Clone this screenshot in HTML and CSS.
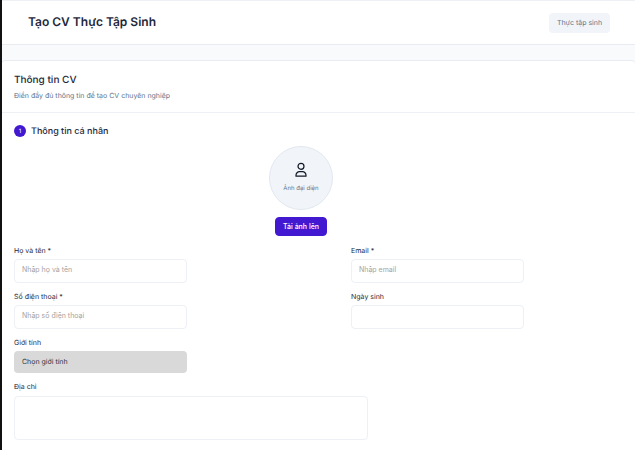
FILE: index.html
```html
<!DOCTYPE html>
<html lang="vi">
<head>
<meta charset="utf-8">
<title>Tạo CV Thực Tập Sinh</title>
<link rel="stylesheet" href="styles.css">
</head>
<body>
<div class="page">
  <header class="topbar">
    <h1 class="title">Tạo CV Thực Tập Sinh</h1>
    <span class="role">Thực tập sinh</span>
  </header>
  <main class="main">
    <section class="card">
      <div class="card-head">
        <h2 class="card-title">Thông tin CV</h2>
        <p class="card-sub">Điền đầy đủ thông tin để tạo CV chuyên nghiệp</p>
      </div>
      <div class="card-body">
        <div class="section-title"><span class="step">1</span><h3 class="section-name">Thông tin cá nhân</h3></div>
        <div class="avatar-block">
          <div class="avatar">
            <svg class="avatar-icon" viewBox="0 0 20 20" width="20" height="20" fill="none" stroke="#111827" stroke-width="1.2" stroke-linecap="round" stroke-linejoin="round"><circle cx="10" cy="6.3" r="3"/><path d="M5 16.2v-1a3.5 3.5 0 0 1 3.5-3.5h3a3.5 3.5 0 0 1 3.5 3.5v1z"/></svg>
            <span class="avatar-text">Ảnh đại diện</span>
          </div>
          <button class="upload" type="button">Tải ảnh lên</button>
        </div>
        <div class="grid">
          <div class="field"><label class="label">Họ và tên *</label><input class="input" placeholder="Nhập họ và tên"></div>
          <div class="field"><label class="label">Email *</label><input class="input" placeholder="Nhập email"></div>
          <div class="field"><label class="label">Số điện thoại *</label><input class="input" placeholder="Nhập số điện thoại"></div>
          <div class="field"><label class="label">Ngày sinh</label><input class="input"></div>
          <div class="field"><label class="label">Giới tính</label><div class="select">Chọn giới tính</div></div>
        </div>
        <div class="field address"><label class="label">Địa chỉ</label><textarea class="textarea"></textarea></div>
      </div>
    </section>
  </main>
</div>
</body>
</html>
```
FILE: styles.css
```css
* { box-sizing: border-box; }
html, body { margin: 0; height: 100%; }
body { font-family: Inter, "Noto Sans", sans-serif; background: #fff; overflow: hidden; text-rendering: geometricPrecision; }
.page { height: 450px; border-left: 2px solid #111; background: #f8fafc; }
.topbar { height: 45px; background: #fff; border-top: 1px solid #edf0f5; border-bottom: 1px solid #e8ecf2; display: flex; align-items: center; justify-content: space-between; padding: 0 25px 2px 26px; }
.title { margin: 0; font-size: 12px; font-weight: 600; color: #1e293b; }
.role { width: 61px; height: 20px; margin-top: 2px; border-radius: 4px; background: #f1f5f9; color: #64748b; font-size: 7px; display: flex; align-items: center; justify-content: center; }
.main { padding-top: 15px; }
.card { background: #fff; border-top: 1px solid #e8ecf2; border-radius: 4px 4px 0 0; height: 390px; }
.card-head { height: 52px; border-bottom: 1px solid #edf0f5; padding: 12px 12px 0; }
.card-title { margin: 0; font-size: 10px; line-height: 14px; font-weight: 500; color: #1e293b; }
.card-sub { margin: 2px 0 0; font-size: 7px; line-height: 14px; color: #64748b; }
.card-body { padding: 12px 12px 0; }
.section-title { display: flex; align-items: center; gap: 5px; height: 12px; }
.step { width: 12px; height: 12px; border-radius: 50%; background: #4318d1; color: #fff; font-size: 6px; display: flex; align-items: center; justify-content: center; }
.section-name { margin: 0; font-size: 9px; font-weight: 500; color: #1e293b; }
.avatar-block { display: flex; flex-direction: column; align-items: center; gap: 7px; margin-top: 9px; width: 574px; }
.avatar { width: 64px; height: 64px; padding-bottom: 4px; border-radius: 50%; background: #f1f5f9; border: 1px solid #e2e8f0; display: flex; flex-direction: column; align-items: center; justify-content: center; gap: 5px; }
.avatar-icon { display: block; }
.avatar-text { font-size: 6px; line-height: 8px; color: #64748b; }
.upload { width: 52px; height: 19px; padding: 0; border: 1px solid #4318d1; border-radius: 4px; background: #4318d1; color: #fff; font: 500 7px Inter, sans-serif; }
.grid { display: grid; grid-template-columns: 173px 173px; column-gap: 164px; row-gap: 7px; margin-top: 8px; }
.field { display: flex; flex-direction: column; }
.label { font-size: 7px; line-height: 13px; font-weight: 400; color: #1e293b; margin-bottom: 2px; }
.input { width: 173px; height: 24px; border: 1px solid #edf0f5; border-radius: 4px; padding: 0 7px 3px; font: 7px Inter, sans-serif; background: #fff; margin: 0; outline: 0; }
.input::placeholder { color: #a3a3a3; opacity: 1; }
.select { width: 173px; height: 22px; border-radius: 4px; background: #d9d9d9; color: #333; font-size: 7px; line-height: 21px; padding-left: 8px; }
.address { margin-top: 7px; }
.label + .textarea { margin-top: 1px; }
.textarea { display: block; width: 354px; height: 44px; border: 1px solid #edf0f5; border-radius: 4px; background: #fff; resize: none; margin: 0; outline: 0; }
```
